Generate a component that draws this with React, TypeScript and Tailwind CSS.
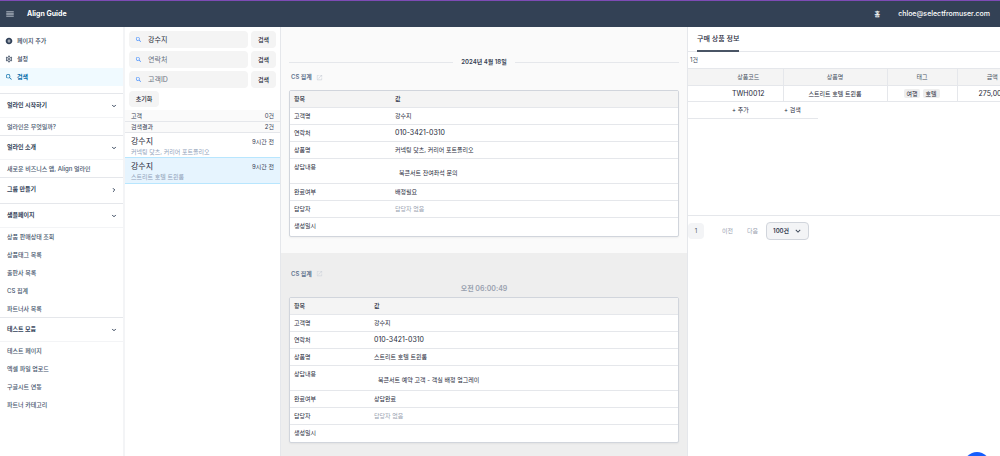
import React, { useState } from "react";
import {
  MdAddCircle,
  MdExpandMore,
  MdMenu,
  MdOpenInNew,
  MdOutlineSettings,
  MdSearch,
} from "react-icons/md";
import { ChevronDown, ChevronRight } from "lucide-react";

const menuGroups = [
  { title: "얼라인 시작하기", items: ["얼라인은 무엇일까?"] },
  { title: "얼라인 소개", items: ["새로운 비즈니스 앱, Align 얼라인"] },
  { title: "그룹 만들기", items: [] },
  {
    title: "샘플페이지",
    items: ["상품 판매상태 조회", "상품태그 목록", "출판사 목록", "CS 집계", "파트너사 목록"],
  },
  {
    title: "테스트 모음",
    items: ["테스트 페이지", "엑셀 파일 업로드", "구글시트 연동", "파트너 카테고리"],
  },
];

const results = [
  { name: "강수지", time: "9시간 전", product: "커넥팅 닷츠, 커리어 포트폴리오" },
  { name: "강수지", time: "9시간 전", product: "스트리트 호텔 트윈룸" },
];

type Ticket = {
  product: string;
  content: string;
  status: string;
};

const Header = () => (
  <header className="flex h-[27px] shrink-0 items-center border-t border-[#7e4bb5] bg-[#334155] text-white">
    <button aria-label="메뉴" className="ml-[5px] text-slate-200">
      <MdMenu size={10} />
    </button>
    <h1 className="ml-3 text-[7px] font-bold">Align Guide</h1>
    <nav className="ml-auto flex items-center gap-[18px] pr-[10px] font-semibold">
      <a href="#home">홈</a>
      <a href="#account" className="text-[7px] font-medium">
        chloe@selectfromuser.com
      </a>
    </nav>
  </header>
);

const Sidebar = () => (
  <aside className="overflow-hidden border-r-2 border-gray-100 text-slate-600">
    <nav>
      <div className="pt-[5px] pb-[7px] font-medium text-slate-700">
        <a href="#add" className="flex h-[18px] items-center gap-1 px-[5px]">
          <MdAddCircle size={8} />
          페이지 추가
        </a>
        <a href="#settings" className="flex h-[18px] items-center gap-1 px-[5px]">
          <MdOutlineSettings size={8} />
          설정
        </a>
        <a
          href="#search"
          className="flex h-[18px] items-center gap-1 bg-[#f0faff] px-[5px] font-bold text-sky-700"
        >
          <MdSearch size={8} />
          검색
        </a>
      </div>
      {menuGroups.map((group) => (
        <div key={group.title} className={group.items.length ? "" : "pb-0.5"}>
          <button className="flex h-6 w-full items-center justify-between border-t border-gray-200 pr-[6px] pl-[7px] font-bold text-slate-700">
            <span className="pb-0.5">{group.title}</span>
            {group.items.length ? (
              <ChevronDown size={6} strokeWidth={4} />
            ) : (
              <ChevronRight size={6} strokeWidth={4} />
            )}
          </button>
          {group.items.length > 0 && (
            <ul className="flex flex-col gap-px border-t border-gray-100">
              {group.items.map((item) => (
                <li key={item}>
                  <a href="#page" className="flex h-[17px] items-center px-[7px] font-medium">
                    {item}
                  </a>
                </li>
              ))}
            </ul>
          )}
        </div>
      ))}
    </nav>
  </aside>
);

const SearchRow = ({ label, value }: { label: string; value?: string }) => (
  <form className="flex gap-[3px]" onSubmit={(e) => e.preventDefault()}>
    <label className="flex h-[17px] min-w-0 flex-1 items-center gap-[6px] rounded bg-[#f4f4f4] pl-[6px]">
      <MdSearch size={7} className="shrink-0 text-blue-500" />
      <input
        aria-label={label}
        placeholder={label}
        defaultValue={value}
        className="w-full min-w-0 bg-transparent text-[7px] text-gray-800 outline-none placeholder:text-gray-500"
      />
    </label>
    <button className="h-[17px] w-[25px] rounded bg-[#f4f4f4] font-medium text-gray-800">검색</button>
  </form>
);

const SearchPanel = () => (
  <section className="overflow-hidden">
    <div className="flex flex-col gap-[3px] px-1 pt-1 pb-[3px]">
      <SearchRow label="고객명" value="강수지" />
      <SearchRow label="연락처" />
      <SearchRow label="고객ID" />
      <button className="h-4 w-[30px] rounded bg-[#f4f4f4] font-medium text-gray-800">초기화</button>
    </div>
    <div className="flex h-[11px] items-center justify-between bg-[#fafafa] px-[6px] text-gray-700">
      <span>고객</span>
      <span>0건</span>
    </div>
    <div className="flex h-3 items-center justify-between border-y border-gray-200 bg-[#fafafa] px-[6px] text-gray-700">
      <span>검색결과</span>
      <span>2건</span>
    </div>
    <ul>
      {results.map((r, i) => (
        <li key={i}>
          <a
            href="#result"
            className={
              i === 1
                ? "block border-y border-sky-200 bg-[#e6f4fe] px-[6px] pt-[3px] pb-px"
                : "block px-[6px] pt-[3px]"
            }
          >
            <div className="flex items-center justify-between text-gray-700">
              <span className="text-[8px] leading-[11px] text-gray-800">{r.name}</span>
              <span>{r.time}</span>
            </div>
            <p className="text-slate-400">{r.product}</p>
          </a>
        </li>
      ))}
    </ul>
  </section>
);

const TicketTitle = () => (
  <a href="#ticket" className="flex items-center gap-1 px-0.5 font-semibold text-slate-500">
    CS 집계
    <MdOpenInNew size={7} className="text-gray-300" />
  </a>
);

const TicketTable = ({ ticket, labelWidth }: { ticket: Ticket; labelWidth: string }) => {
  const rows = [
    ["고객명", "강수지"],
    ["연락처", "010-3421-0310"],
    ["상품명", ticket.product],
    ["상담내용", ticket.content],
    ["완료여부", ticket.status],
    ["담당자", "담당자 없음"],
    ["생성일시", ""],
  ];
  return (
    <div className="overflow-hidden rounded-xs border border-gray-300 bg-white shadow-xs">
      <table className="w-full table-fixed text-left leading-4 text-gray-800">
        <thead>
          <tr className="border-b border-gray-200 bg-[#f4f4f4]">
            <th className={`${labelWidth} px-1 py-0 font-medium`}>항목</th>
            <th className="px-1 py-0 font-medium">값</th>
          </tr>
        </thead>
        <tbody>
          {rows.map(([label, value]) => (
            <tr
              key={label}
              className="border-b border-gray-200 align-top last:h-[18px] last:border-b-0"
            >
              <td className="px-1 py-0">{label}</td>
              <td
                className={
                  label === "상담내용"
                    ? "pt-[6px] pb-0.5 pl-2"
                    : label === "담당자"
                      ? "px-1 py-0 text-gray-400"
                      : label === "연락처"
                        ? "px-1 py-0 text-[7px] leading-4"
                        : "px-1 py-0"
                }
              >
                {value}
              </td>
            </tr>
          ))}
        </tbody>
      </table>
    </div>
  );
};

const Timeline = () => (
  <main className="flex min-h-0 flex-col overflow-hidden border-x border-gray-200">
    <section className="bg-[#fafafa] px-2 pt-[30px] pb-4">
      <div className="flex items-center gap-2 font-semibold text-gray-700">
        <hr className="flex-1 border-gray-200" />
        <span>2024년 4월 18일</span>
        <hr className="flex-1 border-gray-200" />
      </div>
      <div className="pt-[5px] pb-2">
        <TicketTitle />
      </div>
      <TicketTable
        labelWidth="w-[101px]"
        ticket={{
          product: "커넥팅 닷츠, 커리어 포트폴리오",
          content: "북콘서트 잔여좌석 문의",
          status: "배정필요",
        }}
      />
    </section>
    <section className="flex-1 bg-[#eeeeee] px-2 pt-4">
      <TicketTitle />
      <p className="pt-[5px] pb-[3px] text-center text-[7px] font-semibold text-gray-400">
        오전 06:00:49
      </p>
      <TicketTable
        labelWidth="w-[80px]"
        ticket={{
          product: "스트리트 호텔 트윈룸",
          content: "북콘서트 예약 고객 - 객실 배정 업그레이",
          status: "상담완료",
        }}
      />
    </section>
  </main>
);

const Products = () => {
  const [size, setSize] = useState("100건");
  return (
    <section className="overflow-hidden text-gray-700">
      <div className="flex h-[25px] border-b border-gray-200 px-[9px]">
        <button className="h-[25px] border-b-2 border-gray-600 text-[7px] font-medium text-gray-800">
          구매 상품 정보
        </button>
      </div>
      <p className="h-4 px-0.5 leading-4">1건</p>
      <div className="h-[148px] overflow-hidden border-b border-gray-200">
        <table className="w-[339px] table-fixed text-center">
          <thead>
            <tr className="h-[17px] border-y border-gray-200 bg-[#f4f4f4] text-gray-600">
              <th className="w-[26px]" aria-label="선택" />
              <th className="w-[69px] border-r border-gray-200 font-normal">상품코드</th>
              <th className="w-[104px] border-r border-gray-200 font-normal">상품명</th>
              <th className="w-[70px] border-r border-gray-200 font-normal">태그</th>
              <th className="w-[70px] font-normal">금액</th>
            </tr>
          </thead>
          <tbody>
            <tr className="h-4 border-b border-gray-200 text-gray-800">
              <td />
              <td className="border-r border-gray-200 text-[7px]">TWH0012</td>
              <td className="border-r border-gray-200">스트리트 호텔 트윈룸</td>
              <td className="border-r border-gray-200">
                <span className="inline-flex gap-[3px] align-middle">
                  <span className="rounded-xs bg-[#eeeeee] px-0.5 leading-[9px]">여행</span>
                  <span className="rounded-xs bg-[#eeeeee] px-[3px] leading-[9px]">호텔</span>
                </span>
              </td>
              <td className="text-[7px]">275,000</td>
            </tr>
          </tbody>
        </table>
        <div className="flex h-[17px] w-[130px] items-center border-b border-gray-200 pl-[44px] text-gray-800">
          <button className="w-[52px] text-left">+ 추가</button>
          <button>+ 검색</button>
        </div>
      </div>
      <div className="flex items-center pt-[6px] text-gray-400">
        <button className="h-4 w-4 rounded bg-gray-100 text-gray-600">1</button>
        <button className="ml-[18px]">이전</button>
        <button className="ml-[14px]">다음</button>
        <div className="relative ml-2">
          <select
            aria-label="페이지 크기"
            value={size}
            onChange={(e) => setSize(e.target.value)}
            className="h-[18px] w-[43px] appearance-none rounded border border-gray-300 bg-gray-100 pl-[6px] text-[6px] font-semibold text-gray-700"
          >
            <option>100건</option>
            <option>50건</option>
          </select>
          <MdExpandMore
            size={10}
            className="pointer-events-none absolute top-1 right-[6px] text-gray-700"
          />
        </div>
      </div>
    </section>
  );
};

const App = () => {
  return (
    <div className="flex h-screen flex-col overflow-hidden bg-white font-['Inter','Noto_Sans_CJK_KR',sans-serif] text-[6px] leading-[10px]">
      <Header />
      <div className="grid min-h-0 flex-1 grid-cols-[125px_155px_minmax(0,408fr)_minmax(0,312fr)]">
        <Sidebar />
        <SearchPanel />
        <Timeline />
        <Products />
      </div>
      <button
        aria-label="채팅 상담"
        className="fixed right-[10px] -bottom-[22px] h-[26px] w-[26px] rounded-full bg-blue-600 shadow-lg"
      />
    </div>
  );
};

export default App;
